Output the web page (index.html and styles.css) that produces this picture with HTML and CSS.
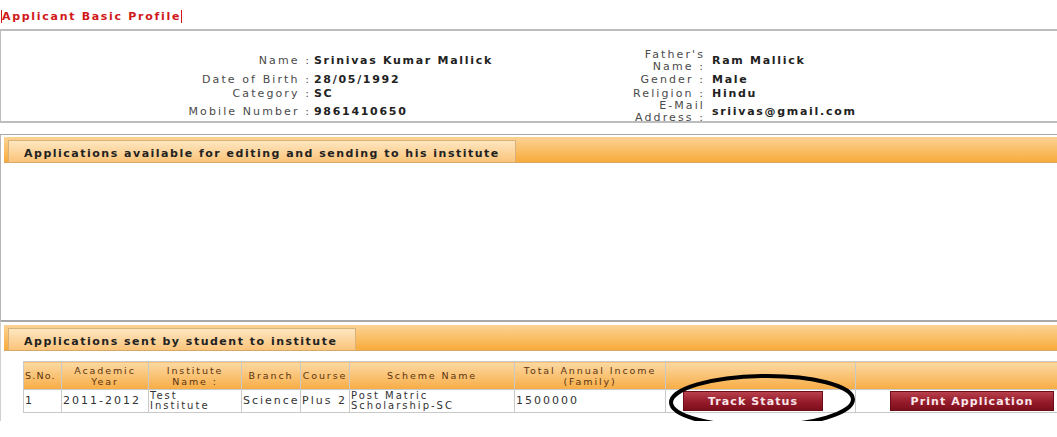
FILE: index.html
```html
<!DOCTYPE html>
<html lang="en">
<head>
  <meta charset="UTF-8" />
  <title>Applicant Basic Profile</title>
  <link rel="stylesheet" href="styles.css">
</head>
<body>
  <div class="page-title"><span>Applicant Basic Profile</span></div>

  <!-- Basic profile -->
  <div class="profile-box">
    <table class="profile">
      <tr class="row-tall">
        <td class="lbl lbl-left">Name :</td>
        <td class="val val-left">Srinivas Kumar Mallick</td>
        <td class="lbl lbl-right">Father's Name :</td>
        <td class="val">Ram Mallick</td>
      </tr>
      <tr class="row-mid">
        <td class="lbl lbl-left">Date of Birth :</td>
        <td class="val val-left">28/05/1992</td>
        <td class="lbl lbl-right">Gender :</td>
        <td class="val">Male</td>
      </tr>
      <tr>
        <td class="lbl lbl-left">Category :</td>
        <td class="val val-left">SC</td>
        <td class="lbl lbl-right">Religion :</td>
        <td class="val">Hindu</td>
      </tr>
      <tr class="row-tall">
        <td class="lbl lbl-left">Mobile Number :</td>
        <td class="val val-left">9861410650</td>
        <td class="lbl lbl-right">E-Mail Address :</td>
        <td class="val">sriivas@gmail.com</td>
      </tr>
    </table>
  </div>

  <!-- Editable applications -->
  <div class="panel panel-editing">
    <div class="panel-bar">
      <div class="panel-tab">Applications available for editing and sending to his institute</div>
    </div>
    <div class="panel-body"></div>
  </div>

  <!-- Sent applications -->
  <div class="panel panel-sent">
    <div class="panel-bar">
      <div class="panel-tab tab-short">Applications sent by student to institute</div>
    </div>
    <div class="panel-body sent-body">
      <table class="grid">
        <colgroup>
          <col class="c-sno">
          <col class="c-year">
          <col class="c-inst">
          <col class="c-branch">
          <col class="c-course">
          <col class="c-scheme">
          <col class="c-income">
          <col class="c-track">
          <col class="c-print">
        </colgroup>
        <tr>
          <th class="th-sno">S.No.</th>
          <th>Academic Year</th>
          <th>Institute Name :</th>
          <th>Branch</th>
          <th>Course</th>
          <th>Scheme Name</th>
          <th>Total Annual Income (Family)</th>
          <th></th>
          <th></th>
        </tr>
        <tr>
          <td>1</td>
          <td>2011-2012</td>
          <td class="tight">Test Institute</td>
          <td>Science</td>
          <td>Plus 2</td>
          <td class="tight">Post Matric Scholarship-SC</td>
          <td>1500000</td>
          <td class="btn-cell track-cell">
            <button class="red-btn btn-track">Track Status</button>
            <svg class="mark" width="196" height="58" viewBox="0 0 196 58">
              <ellipse cx="98" cy="29" rx="91" ry="25" transform="rotate(-1 98 29)" />
            </svg>
          </td>
          <td class="btn-cell print-cell">
            <button class="red-btn btn-print">Print Application</button>
          </td>
        </tr>
      </table>
    </div>
  </div>
</body>
</html>
```

FILE: styles.css
```css
body {
  margin: 0;
  font-family: "DejaVu Sans", Verdana, sans-serif;
  background: #fff;
  color: #222;
  width: 1057px;
  overflow: hidden;
}

.page-title {
  height: 19px;
  padding: 10px 0 0 1px;
  font-size: 11px;
  line-height: 13px;
}

.page-title span {
  display: inline-block;
  vertical-align: top;
  font-weight: bold;
  letter-spacing: 1.7px;
  color: #d01818;
  border-left: 1px solid #d01818;
  border-right: 1px solid #d01818;
}

/* profile */
.profile-box {
  border-top: 2px solid #bdbdbd;
  border-left: 1px solid #bdbdbd;
  border-bottom: 2px solid #bdbdbd;
  height: 72px;
  padding-top: 18px;
}

.profile {
  border-collapse: collapse;
}

.profile td {
  padding: 0;
  height: 13px;
  line-height: 12px;
  font-size: 11px;
  vertical-align: middle;
}

.profile .row-tall td {
  height: 24px;
}

.profile .row-mid td {
  height: 14px;
}

.lbl {
  text-align: right;
  color: #4a4a4a;
  letter-spacing: 2.1px;
}

.lbl-left {
  width: 310px;
}

.lbl-right {
  width: 74px;
  padding-right: 4px !important;
}

.val {
  font-weight: bold;
  color: #222;
  letter-spacing: 1.7px;
  padding-left: 3px !important;
  white-space: nowrap;
}

.val-left {
  width: 317px;
}

/* panels */
.panel {
  border-left: 1px solid #b5b5b5;
  padding: 2px 0 0 3px;
}

.panel-editing {
  margin-top: 11px;
  border-top: 1px solid #a8a8a8;
  height: 183px;
}

.panel-sent {
  border-top: 2px solid #a8a8a8;
  border-left-color: #d0d0d0;
  height: 96px;
  padding-top: 3px;
}

.panel-bar {
  height: 22px;
  padding-top: 3px;
  background: linear-gradient(#fcd395, #f8ab3b);
  border-bottom: 1px solid #d6a868;
}

.panel-tab {
  display: inline-block;
  box-sizing: border-box;
  width: 508px;
  height: 22px;
  margin-left: 4px;
  padding: 6px 0 0 15px;
  background: linear-gradient(#fde6c0, #fbc47a);
  border: 1px solid #d9b17a;
  border-bottom: none;
  font-size: 11px;
  line-height: 13px;
  font-weight: bold;
  letter-spacing: 1.5px;
  color: #222;
  white-space: nowrap;
}

.tab-short {
  width: 348px;
}

.sent-body {
  padding: 10px 0 0 19px;
}

/* grid */
.grid {
  border-collapse: collapse;
  table-layout: fixed;
  width: 1034px;
}

.c-sno { width: 38px; }
.c-year { width: 87px; }
.c-inst { width: 93px; }
.c-branch { width: 59px; }
.c-course { width: 49px; }
.c-scheme { width: 165px; }
.c-income { width: 151px; }
.c-track { width: 190px; }
.c-print { width: 202px; }

.grid th,
.grid td {
  border: 1px solid #c9c9c9;
  padding: 0 1px;
}

.grid th {
  height: 27px;
  font-size: 9.5px;
  line-height: 11px;
  letter-spacing: 1.9px;
  font-weight: normal;
  color: #5c3410;
  background: linear-gradient(#fcd9a4, #f7ac44);
  text-align: center;
}

.grid th.th-sno {
  text-align: left;
  letter-spacing: 1.2px;
}

.grid td {
  height: 22px;
  font-size: 11px;
  line-height: 10px;
  letter-spacing: 2px;
  color: #333;
  background: #fff;
  white-space: nowrap;
}

.grid td.tight {
  white-space: normal;
  font-size: 10px;
  letter-spacing: 2px;
}

.btn-cell {
  position: relative;
}

.track-cell {
  padding-left: 17px !important;
}

.print-cell {
  padding-left: 34px !important;
}

.red-btn {
  height: 20px;
  border: 1px solid #6d0d18;
  background: linear-gradient(#b8404c, #951b2a 55%, #7d0e1c);
  color: #fbe6ea;
  font-family: "DejaVu Sans", Verdana, sans-serif;
  font-size: 11px;
  font-weight: bold;
  letter-spacing: 1.1px;
  padding: 0;
  cursor: pointer;
}

.btn-track {
  width: 140px;
}

.btn-print {
  width: 164px;
}

/* hand drawn annotation over the button */
.mark {
  position: absolute;
  left: -2px;
  top: -18px;
  pointer-events: none;
}

.mark ellipse {
  fill: none;
  stroke: #000;
  stroke-width: 4;
}
```
